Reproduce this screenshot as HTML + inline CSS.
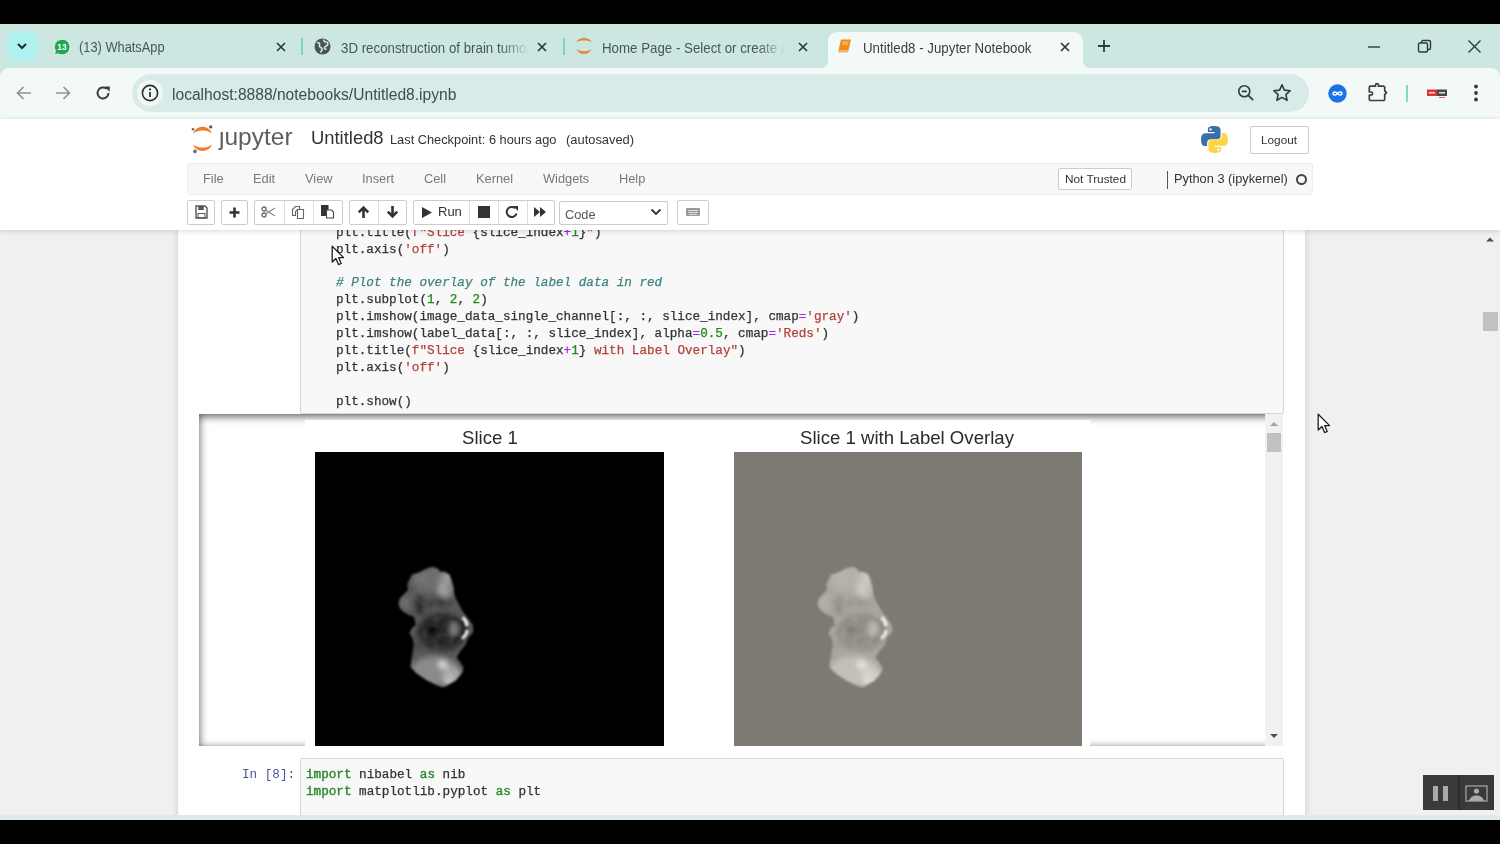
<!DOCTYPE html>
<html><head><meta charset="utf-8">
<style>
*{margin:0;padding:0;box-sizing:border-box}
html,body{width:1500px;height:844px;overflow:hidden;background:#000;font-family:"Liberation Sans",sans-serif}body{filter:blur(0.45px)}
.a{position:absolute}
#tabs{left:0;top:24px;width:1500px;height:60px;background:#cce6e2}
#toolbar{left:0;top:68px;width:1500px;height:51px;background:#f3f9f7;border-radius:9px 9px 0 0}
.tt{position:absolute;font-size:14.3px;color:#4a5756;white-space:nowrap;top:39.7px;line-height:16px;transform:scaleX(.93);transform-origin:0 0}
.sep{position:absolute;width:2px;background:#86cfc6;top:38px;height:17px}
#page{left:0;top:119px;width:1500px;height:700px;background:#f0f0f0;overflow:hidden}
#hdr{left:0;top:0;width:1500px;height:111px;background:#fff;box-shadow:0 0 6px rgba(0,0,0,.25)}
.mi{position:absolute;top:171px;font-size:12.8px;color:#777}
.btn{position:absolute;top:200px;height:25px;border:1px solid #ccc;background:#fff;border-radius:2px}
.mono{font-family:"Liberation Mono",monospace;font-size:12.65px;line-height:16.9px;color:#333;white-space:pre;-webkit-text-stroke:0.25px currentColor}
.k{color:#2a8a2a;-webkit-text-stroke:0.4px currentColor}
.s{color:#b2423a}
.n{color:#1f8a1f}
.o{color:#aa22ff}
.c{color:#3f8282;font-style:italic}
</style></head><body>
<!-- TAB STRIP -->
<div id="tabs" class="a"></div>
<div class="a" style="left:8px;top:31px;width:30px;height:30px;border-radius:9px;background:#b0f2ef"></div>
<svg class="a" style="left:16px;top:40px" width="12" height="12" viewBox="0 0 12 12"><path d="M2 4 L6 8 L10 4" fill="none" stroke="#1f2a30" stroke-width="2"/></svg>
<!-- whatsapp icon -->
<svg class="a" style="left:53px;top:38px" width="18" height="18" viewBox="0 0 18 18"><path d="M9 1.2a7.8 7.8 0 1 1-3.9 14.5L1.4 16.8l1.1-3.6A7.8 7.8 0 0 1 9 1.2z" fill="#1fa84f" stroke="#e9fbf0" stroke-width="0.8"/><text x="9" y="12.2" font-size="8.5" font-family="Liberation Sans" fill="#fff" text-anchor="middle" font-weight="bold">13</text></svg>
<div class="tt" style="left:79px;font-size:13.8px">(13) WhatsApp</div>
<svg class="a" style="left:276px;top:42px" width="10" height="10" viewBox="0 0 10 10"><path d="M1 1L9 9M9 1L1 9" stroke="#2a3333" stroke-width="1.6"/></svg>
<div class="sep" style="left:301px"></div>
<!-- globe -->
<svg class="a" style="left:314px;top:38px" width="17" height="17" viewBox="0 0 17 17"><circle cx="8.5" cy="8.5" r="8" fill="#4a5453"/><path d="M3 4.5c2 0 3 1 2.5 2.5S6 9.5 7.5 10s0 3-1 4.5M10 1.5c-.5 1.5.5 2.5 2 2.5s2.5 1.5 1.5 3-2.5 1-3 2.5 1 2 2 1.5" fill="none" stroke="#cce6e2" stroke-width="1.6"/></svg>
<div class="tt" style="left:341px;width:202px;overflow:hidden;-webkit-mask-image:linear-gradient(90deg,#000 85%,transparent)">3D reconstruction of brain tumor</div>
<svg class="a" style="left:537px;top:42px" width="10" height="10" viewBox="0 0 10 10"><path d="M1 1L9 9M9 1L1 9" stroke="#2a3333" stroke-width="1.6"/></svg>
<div class="sep" style="left:563px"></div>
<!-- jupyter home icon -->
<svg class="a" style="left:575px;top:37px" width="18" height="19" viewBox="0 0 18 19"><path d="M1.3 5.3C4 -0.8 14 -0.8 16.7 5.3C13 2.9 5 2.9 1.3 5.3z" fill="#e08a45"/><path d="M1.3 12.3C4 18.6 14 18.6 16.7 12.3C13 14.9 5 14.9 1.3 12.3z" fill="#e08a45"/></svg>
<div class="tt" style="left:602px;width:197px;overflow:hidden;-webkit-mask-image:linear-gradient(90deg,#000 85%,transparent)">Home Page - Select or create a notebook</div>
<svg class="a" style="left:798px;top:42px" width="10" height="10" viewBox="0 0 10 10"><path d="M1 1L9 9M9 1L1 9" stroke="#2a3333" stroke-width="1.6"/></svg>
<!-- active tab -->
<div class="a" style="left:828px;top:32px;width:255px;height:40px;background:#f3f9f7;border-radius:9px 9px 0 0"></div>
<div class="a" style="left:820px;top:60px;width:8px;height:9px;background:radial-gradient(circle at 0 0,#cce6e2 8px,#f3f9f7 8.5px)"></div>
<div class="a" style="left:1083px;top:60px;width:8px;height:9px;background:radial-gradient(circle at 100% 0,#cce6e2 8px,#f3f9f7 8.5px)"></div>
<svg class="a" style="left:837px;top:38px" width="16" height="16" viewBox="0 0 16 16"><path d="M4 1.5h10l-2.5 11H1.5z" fill="#f08a1c"/><path d="M1.5 12.5h10l-.5 2H1z" fill="#f7b25a"/><path d="M5.5 4h6M5 6h6" stroke="#ffd9a8" stroke-width=".8"/></svg>
<div class="tt" style="left:863px;color:#3a3f41">Untitled8 - Jupyter Notebook</div>
<svg class="a" style="left:1060px;top:42px" width="10" height="10" viewBox="0 0 10 10"><path d="M1 1L9 9M9 1L1 9" stroke="#2a3333" stroke-width="1.6"/></svg>
<svg class="a" style="left:1097px;top:39px" width="14" height="14" viewBox="0 0 14 14"><path d="M7 1V13M1 7H13" stroke="#2f3a3a" stroke-width="1.8"/></svg>
<!-- window controls -->
<svg class="a" style="left:1367px;top:40px" width="14" height="14" viewBox="0 0 14 14"><path d="M1 7H13" stroke="#2f3a3a" stroke-width="1.4"/></svg>
<svg class="a" style="left:1417px;top:39px" width="15" height="15" viewBox="0 0 15 15"><rect x="1.5" y="4" width="9" height="9" rx="1.5" fill="none" stroke="#2f3a3a" stroke-width="1.4"/><path d="M4.5 4V3a1.5 1.5 0 0 1 1.5-1.5h6A1.5 1.5 0 0 1 13.5 3v6a1.5 1.5 0 0 1-1.5 1.5h-1.5" fill="none" stroke="#2f3a3a" stroke-width="1.4"/></svg>
<svg class="a" style="left:1467px;top:39px" width="15" height="15" viewBox="0 0 15 15"><path d="M1.5 1.5L13.5 13.5M13.5 1.5L1.5 13.5" stroke="#2f3a3a" stroke-width="1.4"/></svg>

<!-- TOOLBAR -->
<div id="toolbar" class="a"></div>
<svg class="a" style="left:15px;top:85px" width="18" height="16" viewBox="0 0 18 16"><path d="M16 8H2.5M8.5 2L2.5 8l6 6" fill="none" stroke="#8d9594" stroke-width="1.7"/></svg>
<svg class="a" style="left:54px;top:85px" width="18" height="16" viewBox="0 0 18 16"><path d="M2 8h13.5M9.5 2l6 6-6 6" fill="none" stroke="#8d9594" stroke-width="1.7"/></svg>
<svg class="a" style="left:94px;top:84px" width="18" height="18" viewBox="0 0 18 18"><path d="M14.5 9a5.5 5.5 0 1 1-1.8-4.1" fill="none" stroke="#333a3a" stroke-width="1.9"/><path d="M10.5 2.5h5.2v5.2z" fill="#333a3a"/></svg>
<div class="a" style="left:132px;top:74px;width:1177px;height:38px;border-radius:19px;background:#d9ebe8"></div>
<div class="a" style="left:137px;top:80px;width:26px;height:26px;border-radius:13px;background:#f0f7f5"></div>
<svg class="a" style="left:141px;top:84px" width="18" height="18" viewBox="0 0 18 18"><circle cx="9" cy="9" r="7.6" fill="none" stroke="#2a3030" stroke-width="1.6"/><path d="M9 8V13" stroke="#2a3030" stroke-width="1.8"/><circle cx="9" cy="5.4" r="1.1" fill="#2a3030"/></svg>
<div class="a" style="left:172px;top:85.5px;font-size:15.6px;color:#444c4b;white-space:nowrap;line-height:18px">localhost:8888/notebooks/Untitled8.ipynb</div>
<svg class="a" style="left:1237px;top:84px" width="18" height="18" viewBox="0 0 18 18"><circle cx="7.3" cy="7.3" r="5.5" fill="none" stroke="#333a3a" stroke-width="1.6"/><path d="M4.8 7.3h5M11.3 11.3l4.8 4.8" stroke="#333a3a" stroke-width="1.7"/></svg>
<svg class="a" style="left:1272px;top:83px" width="20" height="19" viewBox="0 0 20 19"><path d="M10 1.8l2.4 5.3 5.8.6-4.3 3.9 1.2 5.7L10 14.4l-5.1 2.9 1.2-5.7L1.8 7.7l5.8-.6z" fill="none" stroke="#333a3a" stroke-width="1.6" stroke-linejoin="round"/></svg>
<svg class="a" style="left:1328px;top:84px" width="19" height="19" viewBox="0 0 19 19"><circle cx="9.5" cy="9.5" r="9.2" fill="#1a73e8"/><path d="M9.5 9.5c-1.5-2-4.5-2-4.5 0s3 2 4.5 0 4.5-2 4.5 0-3 2-4.5 0z" fill="none" stroke="#fff" stroke-width="1.5"/></svg>
<svg class="a" style="left:1366px;top:82px" width="24" height="22" viewBox="0 0 24 22"><path d="M4.5 4.2H9.5V3.2a1.5 1.5 0 0 1 3 0V4.2H17.5a1.2 1.2 0 0 1 1.2 1.2V8.8l1.8 1.9-1.8 1.9V17.3a1.2 1.2 0 0 1-1.2 1.2H4.5a1.2 1.2 0 0 1-1.2-1.2V13.2H5a1.6 1.6 0 0 0 0-3.2H3.3V5.4a1.2 1.2 0 0 1 1.2-1.2z" fill="none" stroke="#3a4242" stroke-width="1.7" stroke-linejoin="round"/></svg>
<div class="a" style="left:1406px;top:85px;width:2px;height:17px;background:#86d8cf"></div>
<svg class="a" style="left:1426px;top:88px" width="22" height="11" viewBox="0 0 22 11"><rect x="1" y="1.5" width="10" height="6.5" fill="#e0352b"/><rect x="11" y="1.5" width="10" height="6.5" fill="#4a4a4a"/><path d="M3 4.7h6M13 4.7h6" stroke="#f5d5d0" stroke-width="1.6"/><path d="M13 9.5h6" stroke="#d55" stroke-width=".9"/></svg>
<svg class="a" style="left:1472px;top:84px" width="8" height="18" viewBox="0 0 8 18"><circle cx="4" cy="2.5" r="1.9" fill="#333a3a"/><circle cx="4" cy="9" r="1.9" fill="#333a3a"/><circle cx="4" cy="15.5" r="1.9" fill="#333a3a"/></svg>

<!-- PAGE -->
<div id="page" class="a"></div>
<!-- notebook container -->
<div class="a" style="left:178px;top:229px;width:1127px;height:590px;background:#fff;box-shadow:0 0 7px rgba(0,0,0,.16)"></div>
<!-- cell1 input -->
<div class="a" style="left:300px;top:200px;width:984px;height:214px;background:#f8f8f8;border:1px solid #d6d6d6;border-radius:2px"></div>
<div class="a mono" style="left:336px;top:224.6px">plt.title(<span class="s">f"Slice </span>{slice_index<span class="o">+</span><span class="n">1</span>}<span class="s">"</span>)
plt.axis(<span class="s">'off'</span>)

<span class="c"># Plot the overlay of the label data in red</span>
plt.subplot(<span class="n">1</span>, <span class="n">2</span>, <span class="n">2</span>)
plt.imshow(image_data_single_channel[:, :, slice_index], cmap<span class="o">=</span><span class="s">'gray'</span>)
plt.imshow(label_data[:, :, slice_index], alpha<span class="o">=</span><span class="n">0.5</span>, cmap<span class="o">=</span><span class="s">'Reds'</span>)
plt.title(<span class="s">f"Slice </span>{slice_index<span class="o">+</span><span class="n">1</span>}<span class="s"> with Label Overlay"</span>)
plt.axis(<span class="s">'off'</span>)

plt.show()</div>
<!-- output scroll -->
<div class="a" style="left:199px;top:414px;width:1084px;height:332px;background:#fff;box-shadow:inset 0 2px 8px rgba(0,0,0,.7);overflow:hidden">
  <div class="a" style="left:106px;top:6px;width:785px;height:330px;background:#fff"></div>
</div>
<div class="a" style="left:1265px;top:414px;width:18px;height:332px;background:#f1f1f1"></div>
<svg class="a" style="left:1268px;top:420px" width="12" height="8" viewBox="0 0 12 8"><path d="M2 6L6 2L10 6z" fill="#a3a3a3"/></svg>
<div class="a" style="left:1267px;top:433px;width:14px;height:19px;background:#c1c1c1"></div>
<svg class="a" style="left:1268px;top:732px" width="12" height="8" viewBox="0 0 12 8"><path d="M2 2L6 6L10 2z" fill="#505050"/></svg>
<!-- figure titles -->
<div class="a" style="left:462px;top:428px;font-size:18.6px;line-height:20px;color:#2a2a2a;white-space:nowrap">Slice 1</div>
<div class="a" style="left:800px;top:428px;font-size:18.6px;line-height:20px;color:#2a2a2a;white-space:nowrap">Slice 1 with Label Overlay</div>
<!-- images -->
<svg class="a" style="left:315px;top:452px" width="767" height="294" viewBox="315 452 767 294">
<defs>
<filter id="bl" color-interpolation-filters="sRGB" x="-20%" y="-20%" width="140%" height="140%"><feGaussianBlur stdDeviation="0.8"/></filter>
<filter id="bl2" color-interpolation-filters="sRGB" x="-50%" y="-50%" width="200%" height="200%"><feGaussianBlur stdDeviation="2.5"/></filter>
<filter id="ov" x="0" y="0" width="100%" height="100%" color-interpolation-filters="sRGB"><feComponentTransfer><feFuncR type="linear" slope="0.5" intercept="0.494"/><feFuncG type="linear" slope="0.5" intercept="0.482"/><feFuncB type="linear" slope="0.5" intercept="0.457"/></feComponentTransfer></filter>
<filter id="tx" x="0" y="0" width="100%" height="100%" color-interpolation-filters="sRGB"><feTurbulence type="fractalNoise" baseFrequency="0.18" numOctaves="2" seed="3"/><feColorMatrix type="matrix" values="0 0 0 0 0.5  0 0 0 0 0.5  0 0 0 0 0.5  1.6 0 0 0 -0.55"/></filter>
<clipPath id="cp"><polygon points="432.9,566.7 438.2,569.1 440,572.1 443.6,571.5 449.5,574.4 451.3,579.8 453.6,587.5 454.2,594 456,599.3 459,604.7 463.1,612 467,617 472.6,624.4 473.5,631.5 468.2,637.8 465.5,644.9 460.2,651.1 456.6,657.3 460.2,662.6 463.7,668 461.9,673.3 455.7,680.4 448.6,684.8 443.3,687.5 438,685.7 427.3,680.4 416.6,673.3 410.4,667 411.3,660.9 413.1,649.3 414,644 412.2,637.8 409.5,633.3 411.3,628.9 415.8,624.4 413.9,617 408.5,614.7 403.9,612 400.9,609.4 398.6,604.7 399.7,598.7 403.9,594.6 408,589.8 407.4,584.5 409.2,579.8 412.2,574.4 418.7,572.7 427,568.5"/></clipPath>
<g id="blob">
<rect x="315" y="452" width="349" height="294" fill="#000"/>
<g filter="url(#bl)"><g clip-path="url(#cp)">
<rect x="390" y="560" width="90" height="135" fill="#555"/>
<g filter="url(#bl2)">
<ellipse cx="432" cy="580" rx="20" ry="13" fill="#6c6c6c"/>
<ellipse cx="446" cy="585" rx="8" ry="14" fill="#8e8e8e"/>
<ellipse cx="441.5" cy="590" rx="4" ry="6" fill="#ababab"/>
<ellipse cx="447.5" cy="578" rx="4" ry="5" fill="#a4a4a4"/>
<ellipse cx="421" cy="579" rx="7" ry="4" fill="#747474"/>
<ellipse cx="404" cy="603" rx="6" ry="8" fill="#6a6a6a"/>
<ellipse cx="420" cy="606" rx="5" ry="10" fill="#2c2c2c"/>
<ellipse cx="440" cy="603" rx="14" ry="4" fill="#3a3a3a"/>
<ellipse cx="442" cy="632" rx="25" ry="19" fill="#242424"/>
<ellipse cx="431.5" cy="630" rx="4" ry="4" fill="#000"/>
<ellipse cx="454" cy="629" rx="5.5" ry="8" fill="#7a7a7a"/>
<ellipse cx="418" cy="645" rx="5" ry="8" fill="#4a4a4a"/>
<ellipse cx="435" cy="671" rx="24" ry="15" fill="#8c8c8c"/>
<ellipse cx="452" cy="675" rx="10" ry="9" fill="#ababab"/>
<ellipse cx="442.5" cy="664.5" rx="5" ry="4.5" fill="#dedede"/>
<ellipse cx="449" cy="681" rx="6" ry="4.5" fill="#cacaca"/>
</g>
<ellipse cx="451" cy="629" rx="13" ry="10.5" fill="none" stroke="#1c1c1c" stroke-width="2.2" opacity=".8"/>
<rect x="390" y="560" width="90" height="135" filter="url(#tx)" opacity=".35"/>
<path d="M462.5 617.5 Q467 621 467 626" fill="none" stroke="#f4f4f4" stroke-width="3.2"/><path d="M467 630 Q467 635 462 638.5" fill="none" stroke="#e8e8e8" stroke-width="3.2"/>
<circle cx="431.5" cy="630" r="2.5" fill="#0a0a0a"/>
</g></g>
</g>
</defs>
<use href="#blob"/>
<g filter="url(#ov)"><use href="#blob" x="419"/></g>
</svg>

<!-- cell 2 -->
<div class="a mono" style="left:242px;top:767px;color:#4a57a0;-webkit-text-stroke:0">In [8]:</div>
<div class="a" style="left:300px;top:758px;width:984px;height:80px;background:#f8f8f8;border:1px solid #d6d6d6;border-radius:2px"></div>
<div class="a mono" style="left:306px;top:767px"><span class="k">import</span> nibabel <span class="k">as</span> nib
<span class="k">import</span> matplotlib.pyplot <span class="k">as</span> plt</div>
<!-- page scrollbar -->
<svg class="a" style="left:1484px;top:235px" width="12" height="8" viewBox="0 0 12 8"><path d="M2 6.5L6 2.5L10 6.5z" fill="#505050"/></svg>
<div class="a" style="left:1483px;top:312px;width:15px;height:19px;background:#c1c1c1"></div>

<!-- JUPYTER HEADER -->
<div class="a" style="left:0;top:119px;width:1500px;height:111px;background:#fff;box-shadow:0 1px 5px rgba(0,0,0,.16)"></div>
<svg class="a" style="left:185px;top:120px" width="32" height="36" viewBox="0 0 32 36"><path d="M8 13.5C11 4.5 24 4.5 27 13.5C22.5 9.6 12.5 9.6 8 13.5z" fill="#ee7f2d"/><path d="M8 24.5C11 33 24 33 27 24.5C22.5 28.6 12.5 28.6 8 24.5z" fill="#ee7f2d"/><circle cx="25.7" cy="6.9" r="1.7" fill="#5a5a5a"/><circle cx="8" cy="9.2" r="1.3" fill="#6a6a6a"/><circle cx="10" cy="31.4" r="1.8" fill="#6a6a6a"/></svg>
<div class="a" style="left:219px;top:123px;font-size:24.5px;line-height:28px;color:#5e5e5e;white-space:nowrap">&#567;upyter</div>
<div class="a" style="left:311px;top:128px;font-size:18.4px;line-height:20px;color:#333;white-space:nowrap">Untitled8</div>
<div class="a" style="left:390px;top:132px;font-size:12.8px;line-height:15px;color:#333;white-space:nowrap">Last Checkpoint: 6 hours ago</div>
<div class="a" style="left:566px;top:132px;font-size:12.9px;line-height:15px;color:#333;white-space:nowrap">(autosaved)</div>
<svg class="a" style="left:1200px;top:125px" width="29" height="29" viewBox="0 0 110 110"><path d="M54 4c-26 0-24 11-24 11v12h25v4H20S4 29 4 55s14 25 14 25h9V68s-.5-14 14-14h24s13 .2 13-12.5V19S80 4 54 4zM40 12a4.5 4.5 0 1 1 0 9 4.5 4.5 0 0 1 0-9z" fill="#3a70a6"/><path d="M56 106c26 0 24-11 24-11V83H55v-4h35s16 2 16-24-14-25-14-25h-9v12s.5 14-14 14H45s-13-.2-13 12.5V91s-2 15 24 15zm14-8a4.5 4.5 0 1 1 0-9 4.5 4.5 0 0 1 0 9z" fill="#fdd446"/></svg>
<div class="a" style="left:1250px;top:126px;width:59px;height:28px;border:1px solid #ccc;border-radius:2px;background:#fff"></div>
<div class="a" style="left:1261px;top:133px;font-size:11.8px;line-height:14px;color:#333">Logout</div>
<!-- menubar -->
<div class="a" style="left:187px;top:163px;width:1126px;height:32px;background:#f8f8f8;border:1px solid #ebebeb;border-radius:3px"></div>
<div class="mi" style="left:203px">File</div>
<div class="mi" style="left:253px">Edit</div>
<div class="mi" style="left:305px">View</div>
<div class="mi" style="left:362px">Insert</div>
<div class="mi" style="left:424px">Cell</div>
<div class="mi" style="left:476px">Kernel</div>
<div class="mi" style="left:543px">Widgets</div>
<div class="mi" style="left:619px">Help</div>
<div class="a" style="left:1058px;top:168px;width:74px;height:22px;border:1px solid #ccc;background:#fff;border-radius:2px"></div>
<div class="a" style="left:1065px;top:172px;font-size:11.8px;line-height:14px;color:#333;white-space:nowrap">Not Trusted</div>
<div class="a" style="left:1167px;top:171px;width:1.2px;height:18px;background:#555"></div>
<div class="a" style="left:1174px;top:171px;font-size:12.8px;line-height:15px;color:#333;white-space:nowrap">Python 3 (ipykernel)</div>
<div class="a" style="left:1296px;top:174px;width:11px;height:11px;border:2px solid #444;border-radius:50%"></div>
<!-- toolbar buttons -->
<div class="btn" style="left:187px;width:28px"></div>
<div class="btn" style="left:221px;width:27px"></div>
<div class="btn" style="left:254px;width:89px"></div>
<div class="a" style="left:284px;top:201px;width:1px;height:23px;background:#ddd"></div>
<div class="a" style="left:313px;top:201px;width:1px;height:23px;background:#ddd"></div>
<div class="btn" style="left:349px;width:58px"></div>
<div class="a" style="left:378px;top:201px;width:1px;height:23px;background:#ddd"></div>
<div class="btn" style="left:413px;width:142px"></div>
<div class="a" style="left:469px;top:201px;width:1px;height:23px;background:#ddd"></div>
<div class="a" style="left:498px;top:201px;width:1px;height:23px;background:#ddd"></div>
<div class="a" style="left:527px;top:201px;width:1px;height:23px;background:#ddd"></div>
<div class="btn" style="left:559px;width:109px;top:201px;height:24px"></div>
<div class="a" style="left:565px;top:207px;font-size:12.8px;line-height:15px;color:#555">Code</div>
<svg class="a" style="left:650px;top:207px" width="12" height="10" viewBox="0 0 12 10"><path d="M1.5 2.5L6 7L10.5 2.5" fill="none" stroke="#333" stroke-width="1.8"/></svg>
<div class="btn" style="left:677px;width:32px"></div>
<svg class="a" style="left:685px;top:206px" width="16" height="12" viewBox="0 0 16 12"><rect x="1" y="2" width="14" height="8" rx="1" fill="#999"/><path d="M3 4.5h10M3 6.5h10M4 8.5h8" stroke="#eee" stroke-width=".8"/></svg>
<!-- icons -->
<svg class="a" style="left:195px;top:205px" width="13" height="14" viewBox="0 0 13 14"><path d="M1 1h9l2 2v10H1z" fill="#fff" stroke="#555" stroke-width="1.4"/><rect x="3.3" y="1" width="5.5" height="4" fill="#555"/><rect x="3" y="8.5" width="7" height="4.5" fill="none" stroke="#555" stroke-width="1"/></svg>
<svg class="a" style="left:228px;top:206px" width="13" height="13" viewBox="0 0 13 13"><path d="M6.5 1.5V11.5M1.5 6.5H11.5" stroke="#333" stroke-width="2.6"/></svg>
<svg class="a" style="left:261px;top:205px" width="15" height="14" viewBox="0 0 15 14"><circle cx="3" cy="4" r="2" fill="none" stroke="#666" stroke-width="1.3"/><circle cx="3" cy="10" r="2" fill="none" stroke="#666" stroke-width="1.3"/><path d="M4.5 5L14 11M4.5 9L14 3" stroke="#888" stroke-width="1.1"/></svg>
<svg class="a" style="left:291px;top:205px" width="14" height="15" viewBox="0 0 14 15"><path d="M1.5 4.5l3-3h4v3h-2l-2 2v4h-3z" fill="#fff" stroke="#666" stroke-width="1.1"/><path d="M6.5 4.5h6v9h-6z" fill="#fff" stroke="#666" stroke-width="1.1"/></svg>
<svg class="a" style="left:320px;top:204px" width="15" height="15" viewBox="0 0 15 15"><rect x="1" y="1" width="7.5" height="11" fill="#333"/><path d="M6.5 6h5l2 2v6h-7z" fill="#fff" stroke="#444" stroke-width="1.1"/></svg>
<svg class="a" style="left:357px;top:205px" width="13" height="14" viewBox="0 0 13 14"><path d="M6.5 13V3M1.8 7.3L6.5 2.5l4.7 4.8" fill="none" stroke="#333" stroke-width="2.6"/></svg>
<svg class="a" style="left:386px;top:205px" width="13" height="14" viewBox="0 0 13 14"><path d="M6.5 1V11M1.8 6.7L6.5 11.5l4.7-4.8" fill="none" stroke="#333" stroke-width="2.6"/></svg>
<svg class="a" style="left:421px;top:206px" width="12" height="13" viewBox="0 0 12 13"><path d="M1 1L11 6.5L1 12z" fill="#333"/></svg>
<div class="a" style="left:438px;top:204px;font-size:13px;line-height:16px;color:#333">Run</div>
<div class="a" style="left:478px;top:206px;width:12px;height:12px;background:#333"></div>
<svg class="a" style="left:505px;top:205px" width="14" height="14" viewBox="0 0 14 14"><path d="M11.5 8.5A5 5 0 1 1 10 3.2" fill="none" stroke="#333" stroke-width="2"/><path d="M8 1h5v5z" fill="#333"/></svg>
<svg class="a" style="left:533px;top:206px" width="15" height="12" viewBox="0 0 15 12"><path d="M1 1l6 5-6 5zM7 1l6 5-6 5z" fill="#333"/></svg>

<!-- bottom line -->
<div class="a" style="left:0;top:815px;width:1500px;height:5px;background:#dfe9ee"></div>
<!-- cursors -->
<svg class="a" style="left:331px;top:245px" width="16" height="22" viewBox="0 0 16 22"><path d="M1.2 1.2V17L4.9 13.5L7.6 19.6L10.2 18.5L7.6 12.6H12.6Z" fill="#fff" stroke="#1e1e1e" stroke-width="1.3" stroke-linejoin="round"/></svg>
<svg class="a" style="left:1317px;top:413px" width="16" height="22" viewBox="0 0 16 22"><path d="M1.2 1.2V17L4.9 13.5L7.6 19.6L10.2 18.5L7.6 12.6H12.6Z" fill="#fff" stroke="#1e1e1e" stroke-width="1.3" stroke-linejoin="round"/></svg>
<!-- video controls -->
<div class="a" style="left:1423px;top:775px;width:71px;height:35px;background:#3a3a3a"></div>
<div class="a" style="left:1458px;top:775px;width:1.5px;height:35px;background:#2c2c2c"></div>
<div class="a" style="left:1433px;top:786px;width:5px;height:15px;background:#a9a9a9"></div>
<div class="a" style="left:1443px;top:786px;width:5px;height:15px;background:#a9a9a9"></div>
<svg class="a" style="left:1465px;top:785px" width="23" height="17" viewBox="0 0 23 17"><rect x="1" y="1" width="21" height="15" fill="none" stroke="#a9a9a9" stroke-width="1.2"/><circle cx="11.5" cy="6" r="2.6" fill="#a9a9a9"/><path d="M4 16C5 12 8 10.5 11.5 10.5S18 12 19 16z" fill="#a9a9a9"/></svg>
<!-- bottom black -->
<div class="a" style="left:0;top:820px;width:1500px;height:24px;background:#000"></div>
</body></html>
